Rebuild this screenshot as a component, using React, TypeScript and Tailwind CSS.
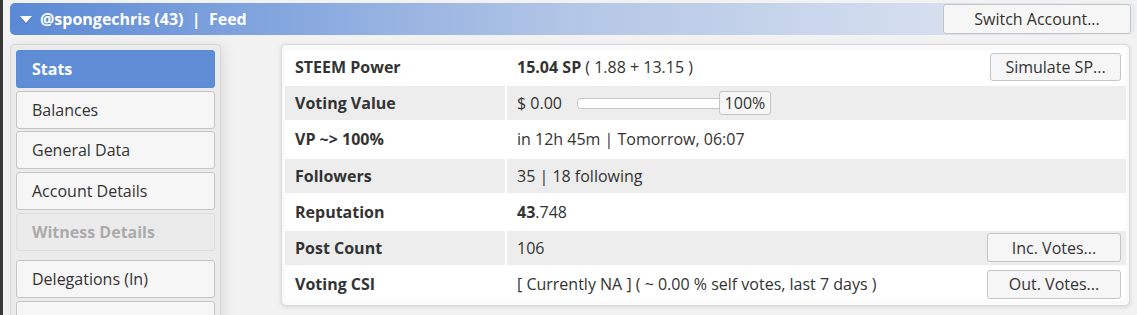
import { ReactNode } from 'react';

const font = { fontFamily: '"Open Sans", "Liberation Sans", sans-serif' };

const menu = [
  { label: 'Stats', kind: 'active' },
  { label: 'Balances', kind: 'normal' },
  { label: 'General Data', kind: 'normal' },
  { label: 'Account Details', kind: 'normal' },
  { label: 'Witness Details', kind: 'disabled' },
  { label: 'Delegations (In)', kind: 'normal' },
  { label: '', kind: 'normal' },
];

function Btn({ children, className = '' }: { children: ReactNode; className?: string }) {
  return (
    <button
      className={`flex items-center justify-center rounded-[3px] border border-[#c5c5c5] bg-[#f6f6f6] text-[16px] text-[#333] ${className}`}
    >
      {children}
    </button>
  );
}

function Row({ label, children, shaded, action }: { label: string; children: ReactNode; shaded?: boolean; action?: ReactNode }) {
  const bg = shaded ? 'bg-[#ededed]' : 'bg-white';
  return (
    <div className="grid h-[34px] grid-cols-[220px_1fr] gap-[2px]">
      <div className={`${bg} flex items-center pl-[10px] text-[16px] font-bold text-[#333]`}>{label}</div>
      <div className={`${bg} flex items-center justify-between pl-[10px] pr-[5px] text-[16px] text-[#333]`}>
        <div className="flex items-center">{children}</div>
        {action}
      </div>
    </div>
  );
}

export default function App() {
  return (
    <div className="flex h-[315px] w-[1137px] overflow-hidden" style={font}>
      <div className="w-[3px] shrink-0 bg-[#383838]" />
      <div className="flex-1 bg-[#f2f2f2] pl-[7px] pr-[2px] pt-[3px]">
        {/* header bar */}
        <div className="flex h-[32px] items-center justify-between rounded-[5px] bg-gradient-to-r from-[#5a89d5] via-[#b3c6e6] to-[#e8ecf2] pl-[10px] pr-[4px]">
          <div className="flex items-center text-[16px] font-bold text-white">
            <span className="mr-[8px] h-0 w-0 border-x-[6px] border-t-[7px] border-x-transparent border-t-white drop-shadow-[0_1px_0_rgba(0,0,0,0.25)]" />
            <span>@spongechris (43)&nbsp;&nbsp;|&nbsp;&nbsp;Feed</span>
          </div>
          <Btn className="h-[30px] w-[188px]">Switch Account...</Btn>
        </div>

        <div className="mt-[9px] flex">
          {/* sidebar */}
          <div className="h-[300px] w-[211px] shrink-0 rounded-[4px] border border-[#d6d6d6] bg-[#ebebeb] px-[5px] pt-[5px] shadow-[4px_0_12px_rgba(0,0,0,0.07)]">
            <div className="flex flex-col gap-[2.7px]">
              {menu.map((m, i) => (
                <div
                  key={i}
                  className={`flex h-[38px] shrink-0 items-center rounded-[3px] border pl-[15px] text-[16px] ${
                    m.kind === 'active'
                      ? 'border-[#5a89d5] bg-[#5e8dd6] font-bold text-white'
                      : m.kind === 'disabled'
                        ? 'mb-[7px] border-[#dcdcdc] bg-[#ebebeb] font-bold text-[#ababab]'
                        : 'border-[#c5c5c5] bg-[#f6f6f6] text-[#333]'
                  }`}
                >
                  {m.label}
                </div>
              ))}
            </div>
          </div>

          {/* stats panel */}
          <div className="ml-[60px] h-[262px] w-[849px] rounded-[5px] border border-[#dadada] bg-[#fafafa] px-[3px] pt-[5px] shadow-[0_1px_4px_rgba(0,0,0,0.12)]">
            <div className="flex flex-col gap-[2.2px] bg-white">
              <Row label="STEEM Power" action={<Btn className="h-[28px] w-[131px]">Simulate SP...</Btn>}>
                <b>15.04 SP</b>&nbsp;( 1.88 + 13.15 )
              </Row>
              <Row label="Voting Value" shaded>
                <span>$ 0.00</span>
                <div className="relative ml-[15px] flex items-center">
                  <div className="h-[11px] w-[146px] rounded-[4px] border border-[#c5c5c5] bg-white" />
                  <div className="-ml-[4px] flex h-[24px] w-[52px] items-center justify-center rounded-[3px] border border-[#c5c5c5] bg-[#f6f6f6]">
                    100%
                  </div>
                </div>
              </Row>
              <Row label="VP ~> 100%">in 12h 45m | Tomorrow, 06:07</Row>
              <Row label="Followers" shaded>35 | 18 following</Row>
              <Row label="Reputation">
                <b>43</b>.748
              </Row>
              <Row label="Post Count" shaded action={<Btn className="h-[29px] w-[134px]">Inc. Votes...</Btn>}>
                106
              </Row>
              <Row label="Voting CSI" action={<Btn className="h-[29px] w-[134px]">Out. Votes...</Btn>}>
                [ Currently NA ] ( ~ 0.00 % self votes, last 7 days )
              </Row>
            </div>
          </div>
        </div>
      </div>
    </div>
  );
}
